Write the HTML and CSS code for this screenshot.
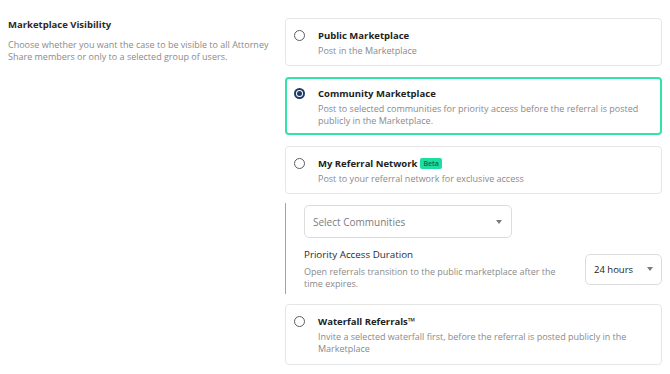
FILE: index.html
```html
<!DOCTYPE html>
<html lang="en">
<head>
  <meta charset="UTF-8">
  <meta name="viewport" content="width=device-width, initial-scale=1.0">
  <title>Marketplace Visibility</title>
  <link rel="stylesheet" href="styles.css">
</head>
<body>
  <section class="visibility">
    <div class="intro">
      <h2>Marketplace Visibility</h2>
      <p>Choose whether you want the case to be visible to all Attorney Share members or only to a selected group of users.</p>
    </div>

    <div class="options">
      <label class="option">
        <span class="radio"></span>
        <span class="option-body">
          <span class="option-title">Public Marketplace</span>
          <span class="option-desc">Post in the Marketplace</span>
        </span>
      </label>

      <label class="option selected">
        <span class="radio"></span>
        <span class="option-body">
          <span class="option-title">Community Marketplace</span>
          <span class="option-desc">Post to selected communities for priority access before the referral is posted publicly in the Marketplace.</span>
        </span>
      </label>

      <label class="option">
        <span class="radio"></span>
        <span class="option-body">
          <span class="option-title">My Referral Network <span class="badge">Beta</span></span>
          <span class="option-desc">Post to your referral network for exclusive access</span>
        </span>
      </label>

      <div class="priority">
        <div class="select communities">
          <span class="placeholder">Select Communities</span>
          <span class="caret"></span>
        </div>
        <div class="duration">
          <div class="duration-text">
            <h3>Priority Access Duration</h3>
            <p>Open referrals transition to the public marketplace after the time expires.</p>
          </div>
          <div class="select hours">
            <span>24 hours</span>
            <span class="caret"></span>
          </div>
        </div>
      </div>

      <label class="option">
        <span class="radio"></span>
        <span class="option-body">
          <span class="option-title">Waterfall Referrals™</span>
          <span class="option-desc">Invite a selected waterfall first, before the referral is posted publicly in the Marketplace</span>
        </span>
      </label>
    </div>
  </section>
</body>
</html>
```

FILE: styles.css
```css
body {
  margin: 0;
  background: #fff;
  font-family: "Open Sans", "Noto Sans", sans-serif;
  color: #222;
}

.visibility {
  display: grid;
  grid-template-columns: 1fr 377px;
  padding: 18px 8px 0 8px;
}

.intro h2 {
  margin: 0;
  font-size: 9.5px;
  font-weight: 700;
  line-height: 13px;
  color: #2a2a2a;
}

.intro p {
  margin: 8px 0 0;
  font-size: 9px;
  line-height: 12px;
  color: #8a8a8a;
  max-width: 262px;
}

.options {
  display: flex;
  flex-direction: column;
  gap: 11px;
}

.option {
  display: flex;
  align-items: flex-start;
  gap: 13px;
  padding: 10px 12px 8px 8px;
  border: 1px solid #e6e6e6;
  border-radius: 4px;
  cursor: pointer;
}

.option.selected {
  border: 2px solid #34e3a8;
  padding: 8px 11px 6px 7px;
}

.option:last-child {
  padding-bottom: 9px;
}

.radio {
  flex: none;
  width: 11px;
  height: 11px;
  margin-top: 1px;
  border: 1.5px solid #5c5c5c;
  border-radius: 50%;
  box-sizing: border-box;
  display: flex;
  align-items: center;
  justify-content: center;
}

.selected .radio {
  border: 2px solid #1d3a6b;
}

.selected .radio::after {
  content: "";
  width: 5px;
  height: 5px;
  border-radius: 50%;
  background: #1d3a6b;
}

.option-body {
  display: flex;
  flex-direction: column;
  gap: 3px;
}

.option-title {
  font-size: 9.5px;
  font-weight: 700;
  line-height: 13px;
  color: #222;
  display: flex;
  align-items: center;
  gap: 3px;
}

.option-desc {
  font-size: 9px;
  line-height: 12px;
  color: #8a8a8a;
}

.badge {
  background: #1fdca0;
  color: #0d6b4b;
  font-size: 7px;
  font-weight: 600;
  line-height: 11px;
  padding: 0 3px;
  border-radius: 2px;
}

.priority {
  margin: -2px 0 -1px;
  border-left: 1.5px solid #a3a3a3;
  padding: 2px 0 4px 18px;
  display: flex;
  flex-direction: column;
  gap: 10px;
}

.select {
  display: flex;
  align-items: center;
  justify-content: space-between;
  border: 1px solid #dcdcdc;
  border-radius: 5px;
  font-size: 9.5px;
  box-sizing: border-box;
}

.communities {
  width: 208px;
  height: 33px;
  padding: 0 9px 0 8px;
  font-size: 10px;
  color: #7c7c7c;
}

.hours {
  width: 77px;
  height: 31px;
  padding: 0 8px 0 8px;
  color: #222;
}

.caret {
  width: 0;
  height: 0;
  border-left: 3.5px solid transparent;
  border-right: 3.5px solid transparent;
  border-top: 4px solid #7a7a7a;
}

.duration {
  display: flex;
  align-items: center;
  justify-content: space-between;
}

.duration-text h3 {
  margin: 0;
  font-size: 9.8px;
  font-weight: 400;
  line-height: 13px;
  color: #2a2a2a;
}

.duration-text p {
  margin: 5px 0 0;
  font-size: 9px;
  line-height: 12px;
  color: #8a8a8a;
  max-width: 258px;
}
```
